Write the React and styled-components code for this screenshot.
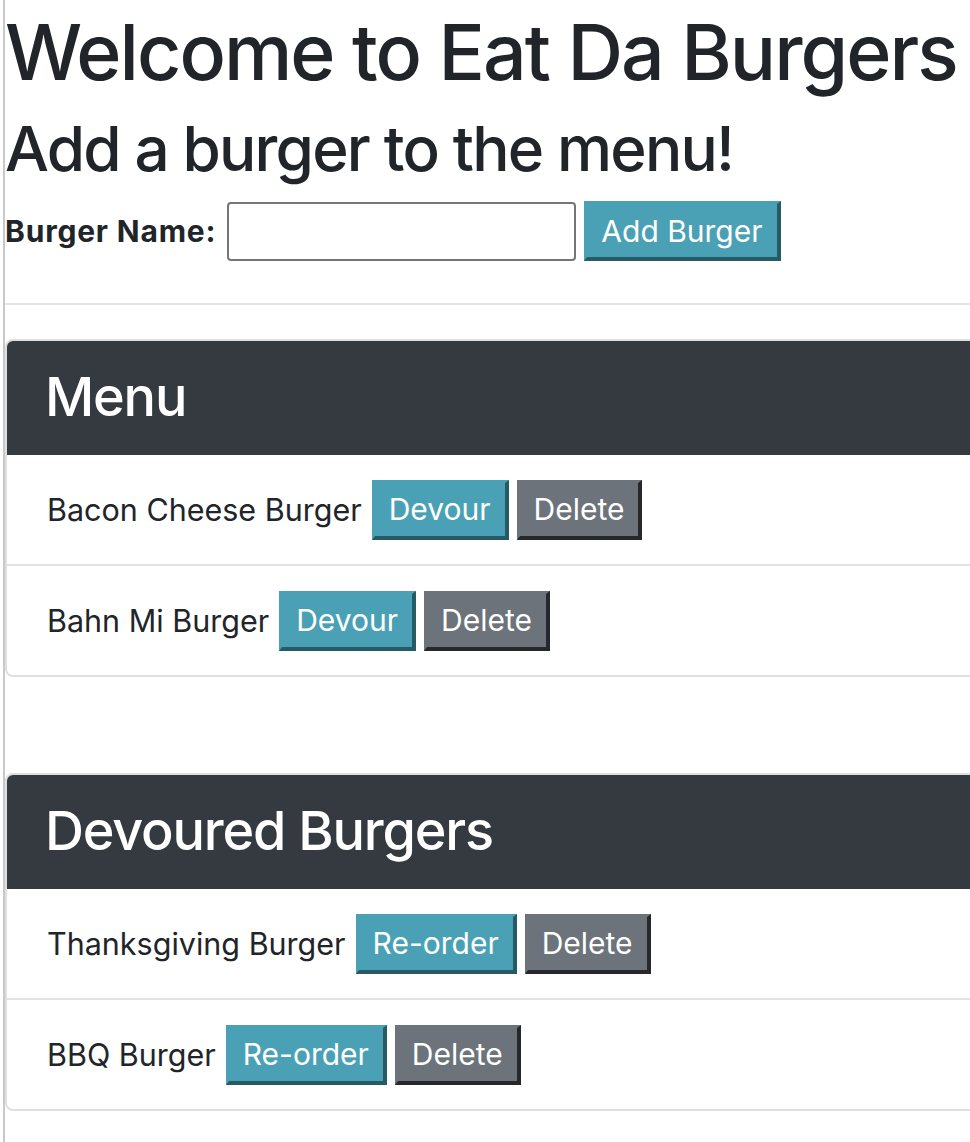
import React from 'react'
import styled, { createGlobalStyle } from 'styled-components'

const GlobalStyle = createGlobalStyle`
  html, body {
    margin: 0;
    padding: 0;
    background: #fff;
    overflow: hidden;
  }
  body {
    font-family: Inter, "Noto Sans", "Liberation Sans", sans-serif;
    color: #212529;
  }
`

const Page = styled.div`
  min-height: 1142px;
  margin-left: 3px;
  border-left: 2px solid #c9c9c9;
  width: 1100px;
`

const Title = styled.h1`
  margin: 0;
  padding-top: 4px;
  font-size: 77px;
  font-weight: 500;
  line-height: 96px;
  letter-spacing: -2px;
`

const Subtitle = styled.h2`
  margin: 0;
  padding-top: 10px;
  font-size: 62px;
  font-weight: 500;
  line-height: 77px;
  letter-spacing: -1.8px;
`

const Form = styled.form`
  display: flex;
  align-items: center;
  gap: 8px;
  margin-top: 14px;
  height: 60px;
`

const Label = styled.label`
  font-size: 30px;
  font-weight: 700;
  letter-spacing: 0.8px;
  margin-right: 3px;
`

const Input = styled.input`
  box-sizing: border-box;
  width: 349px;
  height: 59px;
  border: 2px solid #767676;
  border-radius: 4px;
  font-size: 30px;
  padding: 0 10px;
  font-family: inherit;
`

const Button = styled.button`
  box-sizing: border-box;
  height: 60px;
  padding: 0 14px;
  border-style: solid;
  border-width: 3px 4px 4px 3px;
  border-color: ${p => p.$bg} ${p => p.$edge} ${p => p.$edge} ${p => p.$bg};
  background: ${p => p.$bg};
  color: #fff;
  font-family: inherit;
  font-size: 30px;
  line-height: 48px;
  cursor: pointer;
`

const Divider = styled.hr`
  margin: 42px 0 0 0;
  border: none;
  border-top: 2px solid #e5e5e5;
`

const Card = styled.section`
  margin-top: ${p => p.$top}px;
  width: 1000px;
  border: 2px solid #dfdfdf;
  border-radius: 8px;
  overflow: hidden;
`

const CardHeader = styled.div`
  background: #343a40;
  color: #fff;
  padding: 25px 40px;
  margin: -2px 0 0 -2px;
`

const CardTitle = styled.h3`
  margin: 0;
  font-size: 54px;
  font-weight: 500;
  line-height: 66px;
  letter-spacing: -1.2px;
`

const List = styled.ul`
  margin: 0;
  padding: 0;
  list-style: none;
`

const Item = styled.li`
  display: flex;
  align-items: center;
  gap: 8px;
  padding: 24.5px 40px;
  border-top: ${p => (p.$first ? 'none' : '2px solid #e2e2e2')};
  font-size: 30.5px;
`

const ItemName = styled.span`
  margin-right: 2px;
`

const teal = { bg: '#4aa1b5', edge: '#285a66' }
const gray = { bg: '#6c737b', edge: '#26282b' }

function BurgerCard({ title, items, action, top }) {
  return (
    <Card $top={top}>
      <CardHeader>
        <CardTitle>{title}</CardTitle>
      </CardHeader>
      <List>
        {items.map((name, i) => (
          <Item key={name} $first={i === 0}>
            <ItemName>{name}</ItemName>
            <Button $bg={teal.bg} $edge={teal.edge}>{action}</Button>
            <Button $bg={gray.bg} $edge={gray.edge}>Delete</Button>
          </Item>
        ))}
      </List>
    </Card>
  )
}

export default function App() {
  return (
    <Page>
      <GlobalStyle />
      <Title>Welcome to Eat Da Burgers</Title>
      <Subtitle>Add a burger to the menu!</Subtitle>
      <Form onSubmit={e => e.preventDefault()}>
        <Label htmlFor="burger">Burger Name:</Label>
        <Input id="burger" type="text" />
        <Button $bg={teal.bg} $edge={teal.edge}>Add Burger</Button>
      </Form>
      <Divider />
      <BurgerCard
        top={34}
        title="Menu"
        action="Devour"
        items={['Bacon Cheese Burger', 'Bahn Mi Burger']}
      />
      <BurgerCard
        top={96}
        title="Devoured Burgers"
        action="Re-order"
        items={['Thanksgiving Burger', 'BBQ Burger']}
      />
    </Page>
  )
}
